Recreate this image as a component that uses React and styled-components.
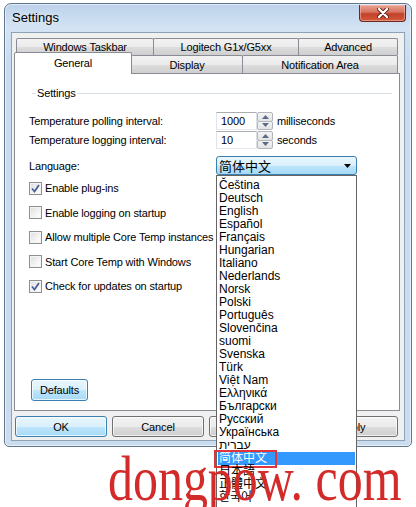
import React from "react";
import styled, { createGlobalStyle } from "styled-components";

const Global = createGlobalStyle`
	html, body {
		margin: 0;
		padding: 0;
		background: #ffffff;
	}
	body {
		font-family: "Segoe UI", "Liberation Sans", "Noto Sans CJK SC", sans-serif;
		font-size: 11px;
		letter-spacing: -0.15px;
		color: #000;
	}
	* {
		box-sizing: border-box;
	}
`

const Page = styled.div`
	position: relative;
	width: 416px;
	height: 507px;
	overflow: hidden;
	padding: 3px 0 0 4px;
`

const Window = styled.div`
	width: 408px;
	height: 444px;
	border: 1px solid #62768e;
	border-radius: 7px 7px 5px 5px;
	background: linear-gradient(to bottom, #bcd2ea 0px, #d3e3f4 24px, #c8dbef 60px, #cbdcef 100%);
	box-shadow: inset 0 0 0 1px rgba(255, 255, 255, 0.55);
	padding: 0 6px 5px 6px;
	display: flex;
	flex-direction: column;
`

const TitleBar = styled.div`
	height: 28px;
	display: flex;
	align-items: flex-start;
	justify-content: space-between;
	padding-left: 1px;
`

const Title = styled.div`
	margin-top: 6px;
	line-height: 16px;
	font-size: 13px;
	letter-spacing: 0;
	color: #000;
	text-shadow: 0 0 6px rgba(255, 255, 255, 0.9);
`

const CloseButton = styled.div`
	width: 47px;
	height: 17px;
	margin-top: 1px;
	margin-right: -1px;
	border: 1px solid #6a2a22;
	border-top: none;
	border-radius: 0 0 4px 4px;
	background: linear-gradient(to bottom, #e8a493 0%, #d8735f 45%, #c2402a 55%, #d45a3a 100%);
	box-shadow: inset 0 0 0 1px rgba(255, 200, 190, 0.5);
	display: flex;
	align-items: center;
	justify-content: center;
`

const Client = styled.div`
	flex: 1;
	border: 1px solid #8da2b7;
	background: #f0f0f0;
	display: flex;
	flex-direction: column;
	padding: 5px 4px 3px 2px;
`

const TabRow = styled.div`
	display: flex;
	height: ${p => p.$height}px;
	margin-left: ${p => p.$indent}px;
	align-items: flex-end;
`

const Tab = styled.div`
	width: ${p => p.$width}px;
	height: ${p => (p.$active ? p.$height + 4 : p.$height)}px;
	margin-left: -1px;
	margin-bottom: ${p => (p.$active ? -1 : 0)}px;
	&:first-child {
		margin-left: 0;
	}
	position: relative;
	z-index: ${p => (p.$active ? 2 : 1)};
	border: 1px solid #898c95;
	border-bottom: none;
	border-radius: 2px 2px 0 0;
	background: ${p =>
		p.$active
			? "#ffffff"
			: "linear-gradient(to bottom, #f2f2f2 0%, #ebebeb 50%, #dddddd 51%, #cfcfcf 100%)"};
	display: flex;
	align-items: center;
	justify-content: center;
	padding-bottom: ${p => (p.$active ? 2 : 0)}px;
	line-height: 14px;
`

const Panel = styled.div`
	flex: 1;
	border: 1px solid #898c95;
	background: #ffffff;
	display: flex;
	flex-direction: column;
	padding: 0 14px 9px 14px;
`

const GroupHeader = styled.div`
	margin: 12px -7px 0 3px;
	height: 14px;
	display: flex;
	align-items: center;
`

const GroupLine = styled.div`
	height: 1px;
	background: #d5dfe5;
	width: ${p => (p.$grow ? "auto" : "4px")};
	flex: ${p => (p.$grow ? 1 : "none")};
`

const GroupLabel = styled.span`
	padding: 0 1px;
	line-height: 14px;
`

const FieldRow = styled.div`
	display: flex;
	align-items: center;
	margin-top: ${p => p.$gap}px;
	height: ${p => p.$height}px;
`

const FieldLabel = styled.div`
	width: 187px;
	flex: none;
`

const Spinner = styled.div`
	display: flex;
	height: 18px;
`

const SpinEdit = styled.div`
	width: 41px;
	height: 18px;
	border: 1px solid #abadb3;
	border-left-color: #e2e3ea;
	border-right-color: #dbdfe6;
	border-bottom-color: #e3e9ef;
	padding-left: 4px;
	line-height: 16px;
	background: #fff;
`

const SpinButtons = styled.div`
	width: 16px;
	display: flex;
	flex-direction: column;
`

const SpinButton = styled.div`
	flex: 1;
	border: 1px solid #b2b5ba;
	margin-top: ${p => (p.$down ? -1 : 0)}px;
	border-radius: 2px;
	background: linear-gradient(to bottom, #f4f4f4, #e3e3e3);
	display: flex;
	align-items: center;
	justify-content: center;
`

const Unit = styled.span`
	margin-left: 4px;
	line-height: 18px;
`

const ComboWrap = styled.div`
	position: relative;
	width: 141px;
	height: 19px;
`

const Combo = styled.div`
	height: 19px;
	border: 1px solid #3c7fb1;
	border-radius: 3px;
	background: linear-gradient(to bottom, #eaf6fd 0%, #d9f0fc 50%, #bee6fd 51%, #a7d9f5 100%);
	display: flex;
	align-items: center;
	justify-content: space-between;
	padding: 0 5px 0 2px;
	font-family: "Noto Sans CJK SC", sans-serif;
	font-size: 13px;
	letter-spacing: 0;
`

const DropList = styled.div`
	position: absolute;
	top: 19px;
	left: 0;
	width: 141px;
	height: 360px;
	border: 1px solid #646464;
	background: #fff;
	z-index: 10;
	padding: 3px 1px 0 1px;
`

const Item = styled.div`
	position: relative;
	height: 13px;
	line-height: 13px;
	padding-left: 1px;
	white-space: nowrap;
	font-family: "Segoe UI", "Liberation Sans", "DejaVu Sans", "Noto Sans CJK SC", sans-serif;
	background: ${p => (p.$selected ? "#3399ff" : "transparent")};
	color: ${p => (p.$selected ? "#ffffff" : "#000000")};
	font-size: 12px;
	letter-spacing: 0;
`

const Marker = styled.div`
	position: absolute;
	left: -4px;
	top: -2px;
	width: 63px;
	height: 18px;
	border: 2px solid #e0353b;
`

const CheckList = styled.div`
	margin-top: 1px;
	display: flex;
	flex-direction: column;
`

const CheckRow = styled.div`
	height: 24.5px;
	display: flex;
	align-items: center;
	gap: 3px;
`

const Box = styled.div`
	width: 13px;
	height: 13px;
	border: 1px solid #8e8f8f;
	background: linear-gradient(135deg, #dcdcdc 0%, #f4f4f4 60%, #ffffff 100%);
	box-shadow: inset 0 0 0 1px #f4f4f4;
	display: flex;
	align-items: center;
	justify-content: center;
`

const Button = styled.div`
	width: ${p => p.$width}px;
	height: ${p => p.$height}px;
	border: 1px solid ${p => (p.$focus ? "#3c7fb1" : "#707070")};
	border-radius: 3px;
	background: ${p =>
		p.$focus
			? "linear-gradient(to bottom, #eaf6fd 0%, #d9f0fc 50%, #bee6fd 51%, #a7d9f5 100%)"
			: "linear-gradient(to bottom, #f2f2f2 0%, #ebebeb 50%, #dddddd 51%, #cfcfcf 100%)"};
	box-shadow: inset 0 0 0 1px rgba(255, 255, 255, 0.7);
	display: flex;
	align-items: center;
	justify-content: center;
`

const DefaultsButton = styled(Button)`
	margin-top: auto;
	margin-left: 2px;
`

const ButtonRow = styled.div`
	display: flex;
	gap: 5px;
	margin: 5px 0 0 1px;
`

const Watermark = styled.div`
	position: absolute;
	left: 108px;
	top: 447px;
	font-family: "Liberation Serif", "Times New Roman", serif;
	font-size: 64px;
	line-height: 64px;
	letter-spacing: 0;
	color: #d32a2a;
	white-space: pre;
	transform: scaleX(0.78);
	transform-origin: left top;
	z-index: 20;
	pointer-events: none;
`

const languages = [
	"Čeština", "Deutsch", "English", "Español", "Français", "Hungarian", "Italiano",
	"Nederlands", "Norsk", "Polski", "Português", "Slovenčina", "suomi", "Svenska",
	"Türk", "Việt Nam", "Ελληνικά", "Български", "Русский", "Українська", "עברית",
	"简体中文", "日本語", "正體中文", "한국어",
];

const options = [
	{ label: "Enable plug-ins", checked: true },
	{ label: "Enable logging on startup", checked: false },
	{ label: "Allow multiple Core Temp instances", checked: false },
	{ label: "Start Core Temp with Windows", checked: false },
	{ label: "Check for updates on startup", checked: true },
];

const Arrow = ({ up }) => (
	<svg width="7" height="4" viewBox="0 0 7 4">
		<path d={up ? "M0 4 L3.5 0 L7 4 Z" : "M0 0 L3.5 4 L7 0 Z"} fill="#5a6b85" />
	</svg>
);

const SpinBox = ({ value }) => (
	<Spinner>
		<SpinEdit>{value}</SpinEdit>
		<SpinButtons>
			<SpinButton><Arrow up /></SpinButton>
			<SpinButton $down><Arrow /></SpinButton>
		</SpinButtons>
	</Spinner>
);

const Check = ({ checked }) => (
	<Box>
		{checked && (
			<svg width="9" height="9" viewBox="0 0 9 9">
				<path d="M1 4.5 L3.5 7.5 L8 1" stroke="#4a5f97" strokeWidth="1.8" fill="none" />
			</svg>
		)}
	</Box>
);

const App = () => (
	<Page>
		<Global />
		<Window>
			<TitleBar>
				<Title>Settings</Title>
				<CloseButton>
					<svg width="12" height="10" viewBox="0 0 12 10">
						<path d="M2 1 L10 9 M10 1 L2 9" stroke="#5a1a12" strokeWidth="4" strokeLinecap="round" />
						<path d="M2 1 L10 9 M10 1 L2 9" stroke="#ffffff" strokeWidth="2.4" strokeLinecap="round" />
					</svg>
				</CloseButton>
			</TitleBar>
			<Client>
				<TabRow $height={17} $indent={2}>
					<Tab $width={138} $height={17}>Windows Taskbar</Tab>
					<Tab $width={146} $height={17}>Logitech G1x/G5xx</Tab>
					<Tab $width={100} $height={17}>Advanced</Tab>
				</TabRow>
				<TabRow $height={18} $indent={0}>
					<Tab $width={118} $height={18} $active>General</Tab>
					<Tab $width={112} $height={18}>Display</Tab>
					<Tab $width={156} $height={18}>Notification Area</Tab>
				</TabRow>
				<Panel>
					<GroupHeader>
						<GroupLine />
						<GroupLabel>Settings</GroupLabel>
						<GroupLine $grow />
					</GroupHeader>
					<FieldRow $gap={12} $height={18}>
						<FieldLabel>Temperature polling interval:</FieldLabel>
						<SpinBox value="1000" />
						<Unit>milliseconds</Unit>
					</FieldRow>
					<FieldRow $gap={1} $height={18}>
						<FieldLabel>Temperature logging interval:</FieldLabel>
						<SpinBox value="10" />
						<Unit>seconds</Unit>
					</FieldRow>
					<FieldRow $gap={7} $height={19}>
						<FieldLabel>Language:</FieldLabel>
						<ComboWrap>
							<Combo>
								<span>简体中文</span>
								<svg width="7" height="4" viewBox="0 0 7 4">
									<path d="M0 0 L3.5 4 L7 0 Z" fill="#000" />
								</svg>
							</Combo>
							<DropList>
								{languages.map(lang => (
									<Item key={lang} $selected={lang === "简体中文"}>
										{lang}
										{lang === "简体中文" && <Marker />}
									</Item>
								))}
							</DropList>
						</ComboWrap>
					</FieldRow>
					<CheckList>
						{options.map(o => (
							<CheckRow key={o.label}>
								<Check checked={o.checked} />
								<span>{o.label}</span>
							</CheckRow>
						))}
					</CheckList>
					<DefaultsButton $width={57} $height={22} $focus>Defaults</DefaultsButton>
				</Panel>
				<ButtonRow>
					<Button $width={92} $height={21} $focus>OK</Button>
					<Button $width={92} $height={21}>Cancel</Button>
					<Button $width={92} $height={21}>Help</Button>
					<Button $width={92} $height={21}>Apply</Button>
				</ButtonRow>
			</Client>
		</Window>
		<Watermark>dongpow. com</Watermark>
	</Page>
);

export default App;
